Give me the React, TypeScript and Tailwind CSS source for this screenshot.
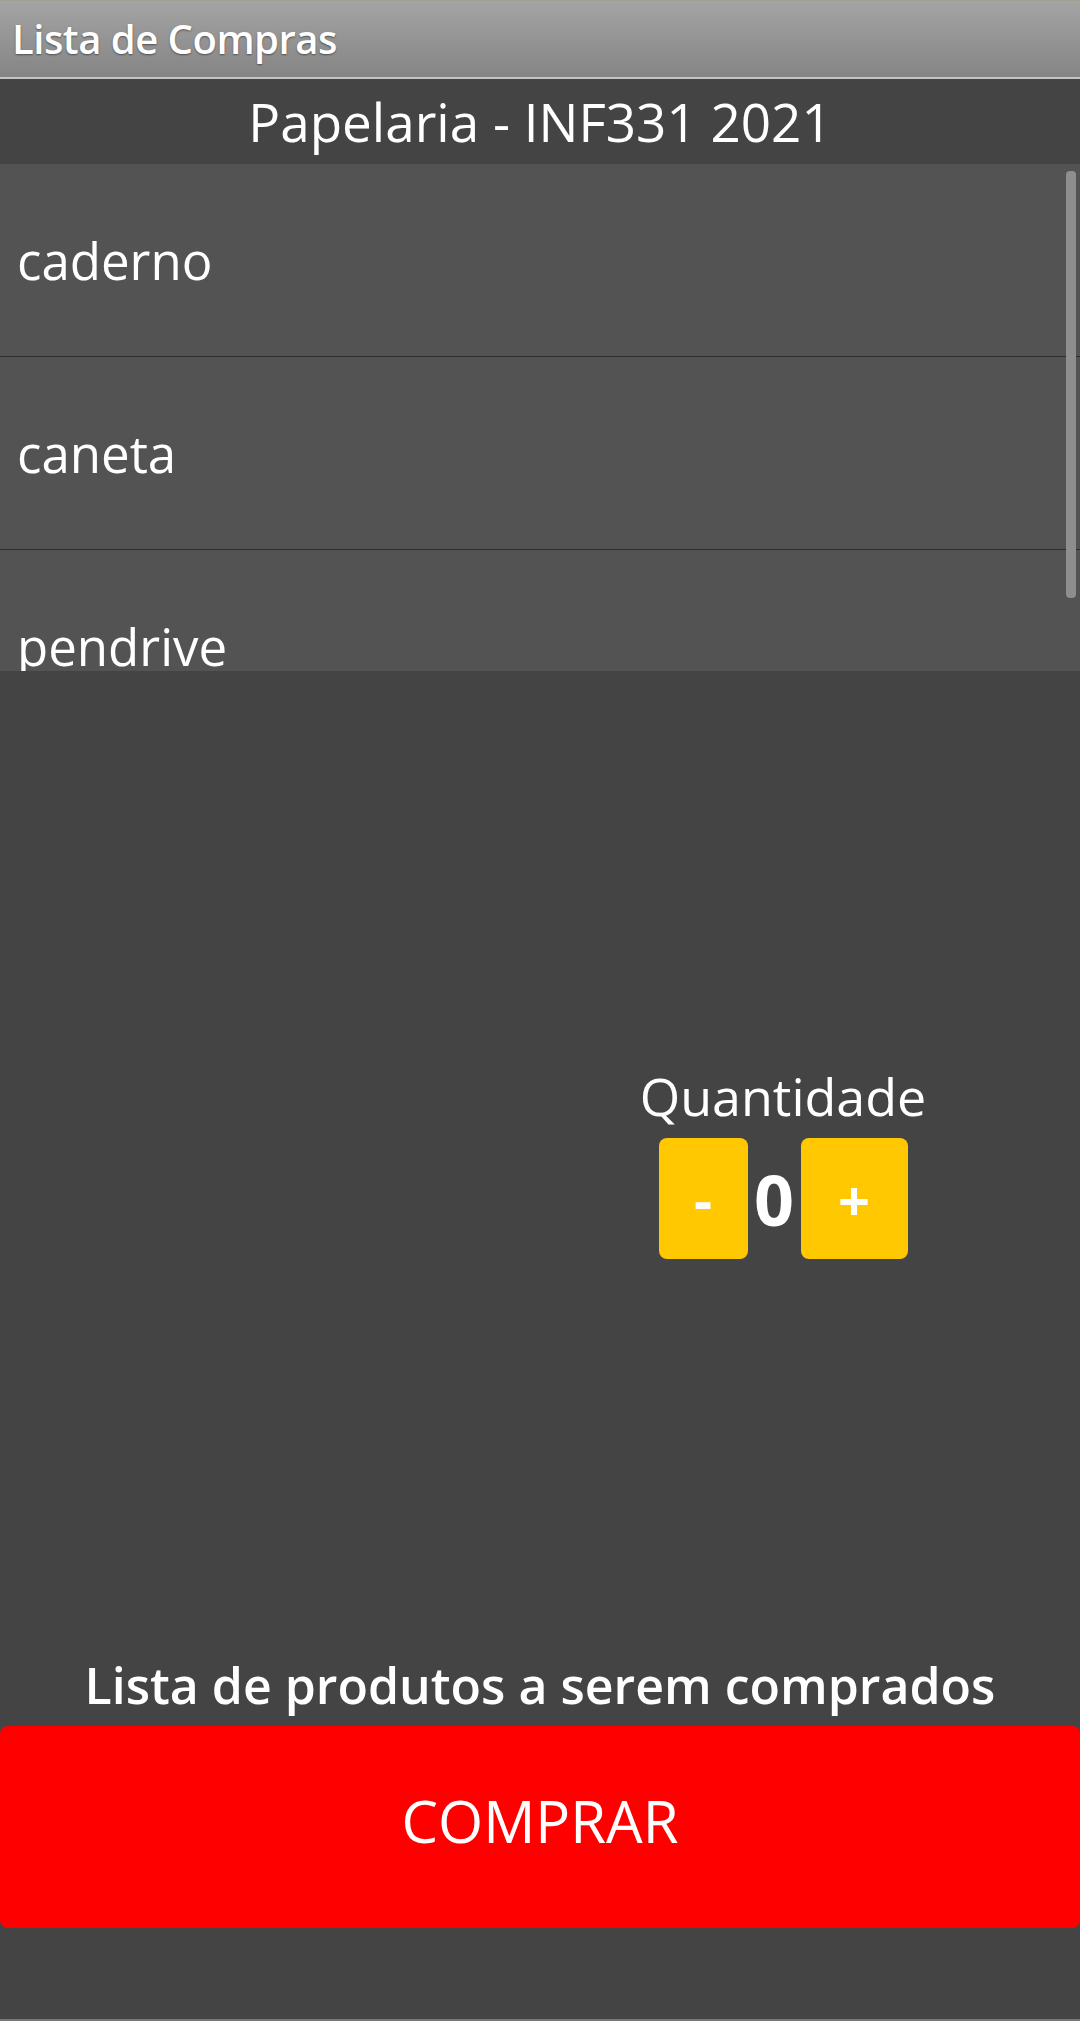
import React from "react";

const font = { fontFamily: '"Open Sans", "Noto Sans", sans-serif' };

export default function App() {
  const items = ["caderno", "caneta", "pendrive"];
  return (
    <div className="w-[1080px] h-[2021px] flex flex-col bg-[#444444] text-white overflow-hidden" style={font}>
      {/* title bar */}
      <div className="h-[79px] shrink-0 flex items-center pl-[12px] bg-gradient-to-b from-[#a4a4a4] to-[#858585] border-t border-[#9ba391] border-b-2 border-b-[#c4c4c4]">
        <span className="text-[40px] font-semibold leading-none tracking-[-0.5px] [text-shadow:0_1px_2px_rgba(0,0,0,0.45)]">
          Lista de Compras
        </span>
      </div>
      {/* header */}
      <div className="h-[85px] shrink-0 flex items-center justify-center bg-[#444444]">
        <span className="text-[53px] leading-none">Papelaria - INF331 2021</span>
      </div>
      {/* list */}
      <div className="relative h-[507px] shrink-0 bg-[#535353] overflow-hidden">
        {items.map((it) => (
          <div key={it} className="h-[193px] flex items-center pl-[17px] border-b border-[#2e2e2e]">
            <span className="text-[51px] leading-none">{it}</span>
          </div>
        ))}
        <div className="absolute right-[4px] top-[7px] w-[10px] h-[427px] rounded-[4px] bg-[#8e8e8e]" />
      </div>
      {/* main */}
      <div className="flex-1 flex flex-col">
        <div className="h-[399px] shrink-0" />
        <div className="flex justify-end pr-[147px]">
          <div className="w-[300px] flex flex-col items-center">
            <span className="text-[52px] leading-none">Quantidade</span>
            <div className="mt-[16px] flex items-center">
              <div className="w-[89px] h-[121px] rounded-[8px] bg-[#ffc800] flex items-center justify-center">
                <span className="text-[56px] font-bold leading-none">-</span>
              </div>
              <span className="w-[53px] text-center text-[70px] font-bold leading-none">0</span>
              <div className="w-[107px] h-[121px] rounded-[8px] bg-[#ffc800] flex items-center justify-center">
                <span className="text-[56px] font-bold leading-none">+</span>
              </div>
            </div>
          </div>
        </div>
        <div className="h-[401px] shrink-0" />
        <div className="flex justify-center">
          <span className="text-[50px] font-semibold leading-none">Lista de produtos a serem comprados</span>
        </div>
        <div className="mt-[16px] h-[202px] rounded-[8px] bg-[#ff0000] flex items-center justify-center pb-[12px]">
          <span className="text-[58px] font-medium leading-none">COMPRAR</span>
        </div>
        <div className="flex-1" />
        <div className="h-[2px] bg-[#777]" />
      </div>
    </div>
  );
}
